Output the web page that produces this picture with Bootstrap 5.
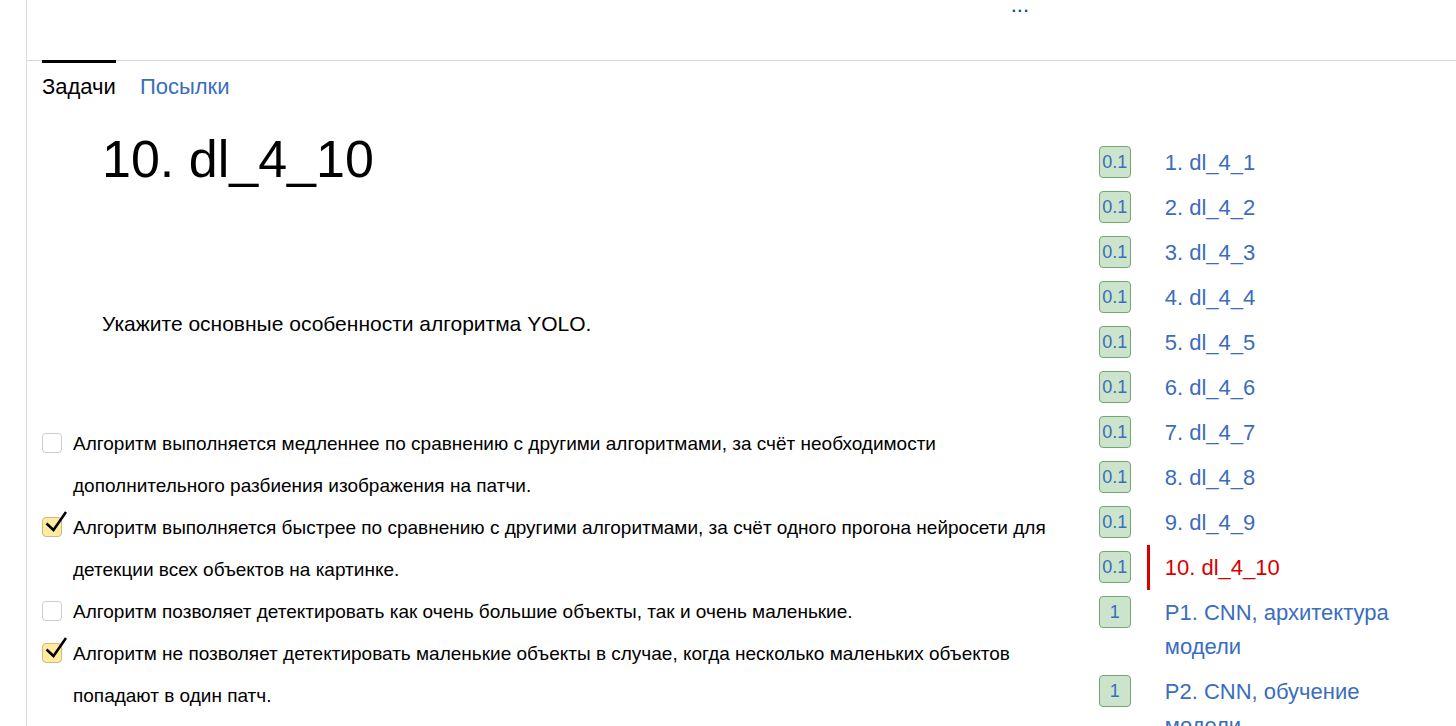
<!DOCTYPE html>
<html lang="ru">
<head>
<meta charset="utf-8">
<meta name="viewport" content="width=device-width, initial-scale=1">
<title>10. dl_4_10</title>
<link rel="stylesheet" href="https://cdn.jsdelivr.net/npm/bootstrap@5.3.0/dist/css/bootstrap.min.css">
<style>
  body { font-family: "Liberation Sans", Arial, sans-serif; color: #000; background: #fff; overflow-x: hidden; }
  a { color: #3a6dbd; text-decoration: none; }
  a:hover { color: #d00; }
  .sheet { margin-left: 26px; border-left: 1px solid #ddd; min-height: 100vh; }
  .topbar { height: 61px; border-bottom: 1px solid #d9d9d9; padding-right: 427px; }
  .topbar a { font-size: 22px; line-height: 10px; color: #14409a; }
  .tabs { gap: 24px; padding-left: 15px; margin-top: -1px; font-size: 22px; line-height: 34px; }
  .tabs a { border-top: 3px solid transparent; padding-top: 7px; }
  .tabs a.active { color: #000; border-color: #000; }
  .problem { padding: 0 15px; }
  .problem h1 { font-size: 52px; line-height: 64px; font-weight: 400; margin: 23px 0 0 60px; }
  .statement { font-size: 21px; line-height: 34px; margin: 116px 0 82px 60px; }
  .answer { display: flex; gap: 11px; font-size: 19px; line-height: 42px; }
  .tick-box { position: relative; flex: none; width: 20px; height: 20px; margin-top: 10px; }
  .tick-box input { appearance: none; display: block; width: 20px; height: 20px; margin: 0; border: 1px solid #ccc; border-radius: 4px; background: #fff; }
  .tick-box input:checked { background: #ffeba0; border-color: #ccbc80; }
  .tick-box svg { position: absolute; left: 0; top: -8px; pointer-events: none; display: none; }
  .tick-box input:checked + svg { display: block; }
  .tasks { padding: 36px 15px 0 0; }
  .task { display: flex; gap: 16px; font-size: 22px; line-height: 34px; }
  .score { flex: none; width: 32px; height: 32px; margin-top: 6px; font-size: 18px; line-height: 30px; text-align: center; background: #cce4cc; border: 1px solid #72a872; border-radius: 4px; }
  .task-link { border-left: 3px solid transparent; padding: 6px 0 5px 15px; }
  .task.current .task-link { color: #d90000; border-color: #d90000; }
</style>
</head>
<body>
<div class="sheet">
  <header class="topbar d-flex justify-content-end align-items-start"><a href="#">...</a></header>
  <nav class="tabs d-flex">
    <a href="#" class="active" aria-current="page">Задачи</a>
    <a href="#">Посылки</a>
  </nav>
  <div class="row g-0">
    <main class="col-9 problem">
      <h1>10. dl_4_10</h1>
      <p class="statement">Укажите основные особенности алгоритма YOLO.</p>
      <form>
        <div class="answer">
          <span class="tick-box"><input type="checkbox" id="a1"><svg width="26" height="28" viewBox="0 0 26 28"><path d="M4.500 14.500L11.500 21L24 3" fill="none" stroke="#000" stroke-width="2.500"/></svg></span>
          <label for="a1">Алгоритм выполняется медленнее по сравнению с другими алгоритмами, за счёт необходимости дополнительного разбиения изображения на патчи.</label>
        </div>
        <div class="answer">
          <span class="tick-box"><input type="checkbox" id="a2" checked><svg width="26" height="28" viewBox="0 0 26 28"><path d="M4.500 14.500L11.500 21L24 3" fill="none" stroke="#000" stroke-width="2.500"/></svg></span>
          <label for="a2">Алгоритм выполняется быстрее по сравнению с другими алгоритмами, за счёт одного прогона нейросети для детекции всех объектов на картинке.</label>
        </div>
        <div class="answer">
          <span class="tick-box"><input type="checkbox" id="a3"><svg width="26" height="28" viewBox="0 0 26 28"><path d="M4.500 14.500L11.500 21L24 3" fill="none" stroke="#000" stroke-width="2.500"/></svg></span>
          <label for="a3">Алгоритм позволяет детектировать как очень большие объекты, так и очень маленькие.</label>
        </div>
        <div class="answer">
          <span class="tick-box"><input type="checkbox" id="a4" checked><svg width="26" height="28" viewBox="0 0 26 28"><path d="M4.500 14.500L11.500 21L24 3" fill="none" stroke="#000" stroke-width="2.500"/></svg></span>
          <label for="a4">Алгоритм не позволяет детектировать маленькие объекты в случае, когда несколько маленьких объектов попадают в один патч.</label>
        </div>
      </form>
    </main>
    <aside class="col-3 tasks">
      <div class="task"><a class="score" href="#">0.1</a><a class="task-link" href="#">1. dl_4_1</a></div>
      <div class="task"><a class="score" href="#">0.1</a><a class="task-link" href="#">2. dl_4_2</a></div>
      <div class="task"><a class="score" href="#">0.1</a><a class="task-link" href="#">3. dl_4_3</a></div>
      <div class="task"><a class="score" href="#">0.1</a><a class="task-link" href="#">4. dl_4_4</a></div>
      <div class="task"><a class="score" href="#">0.1</a><a class="task-link" href="#">5. dl_4_5</a></div>
      <div class="task"><a class="score" href="#">0.1</a><a class="task-link" href="#">6. dl_4_6</a></div>
      <div class="task"><a class="score" href="#">0.1</a><a class="task-link" href="#">7. dl_4_7</a></div>
      <div class="task"><a class="score" href="#">0.1</a><a class="task-link" href="#">8. dl_4_8</a></div>
      <div class="task"><a class="score" href="#">0.1</a><a class="task-link" href="#">9. dl_4_9</a></div>
      <div class="task current"><a class="score" href="#">0.1</a><a class="task-link" href="#" aria-current="true">10. dl_4_10</a></div>
      <div class="task"><a class="score" href="#">1</a><a class="task-link" href="#">P1. CNN, архитектура модели</a></div>
      <div class="task"><a class="score" href="#">1</a><a class="task-link" href="#">P2. CNN, обучение модели</a></div>
    </aside>
  </div>
</div>
<script src="https://cdn.jsdelivr.net/npm/bootstrap@5.3.0/dist/js/bootstrap.bundle.min.js"></script>
</body>
</html>
